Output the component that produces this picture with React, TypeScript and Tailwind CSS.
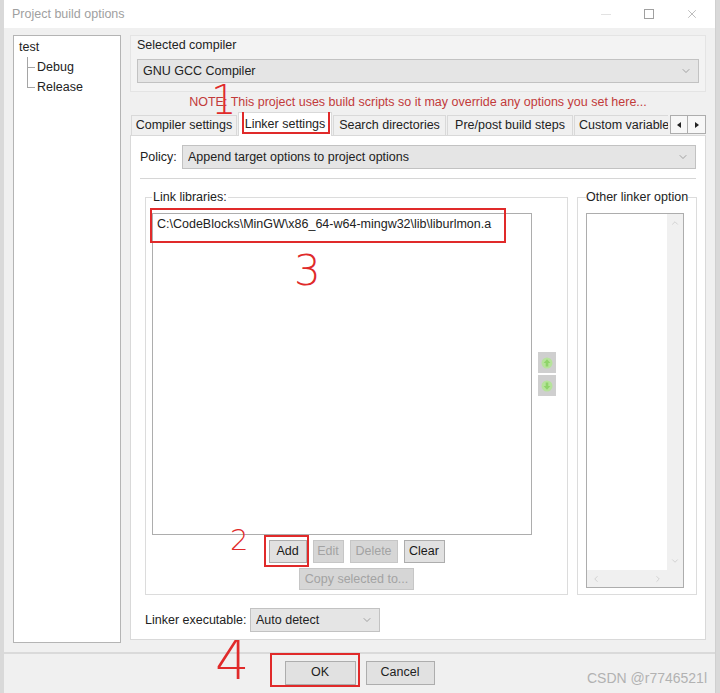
import { ChevronDown, ChevronUp, ChevronLeft, ChevronRight, X } from 'lucide-react';

function Combo({ text, className }: { text: string; className: string }) {
  return (
    <div className={`flex h-[24px] items-center border border-[#c2c2c2] bg-[#e5e5e5] pl-[5px] pr-[6px] ${className}`}>
      <span className="flex-1 truncate">{text}</span>
      <ChevronDown size={12} strokeWidth={1.5} className="text-[#8a8a8a]" />
    </div>
  );
}

function Btn({ label, w, disabled }: { label: string; w: string; disabled?: boolean }) {
  return (
    <div
      className={`flex h-[23px] items-center justify-center border ${w} ${
        disabled ? 'border-[#c6c6c6] bg-[#d6d6d6] text-[#a3a3a3]' : 'border-[#adadad] bg-[#e1e1e1] text-[#1a1a1a]'
      }`}
    >
      {label}
    </div>
  );
}

function GreenArrow({ down }: { down?: boolean }) {
  return (
    <div className="flex h-[21px] w-[18px] items-center justify-center bg-[#cfcfcf]">
      <svg width="12" height="12" viewBox="0 0 12 12" className={down ? 'rotate-180' : ''}>
        <circle cx="6" cy="6" r="5.5" fill="#b6e39b" />
        <path d="M6 2.2 L9.4 6 H7.3 V9.6 H4.7 V6 H2.6 Z" fill="#8fd46a" />
      </svg>
    </div>
  );
}

function TreeChild({ label, last }: { label: string; last?: boolean }) {
  return (
    <div className="flex h-[20px] items-center">
      <span className="relative ml-[8px] h-full w-[10px]">
        <span className={`absolute left-0 top-0 border-l border-[#a5a5a5] ${last ? 'h-1/2' : 'h-full'}`} />
        <span className="absolute left-0 top-1/2 w-[8px] border-t border-[#a5a5a5]" />
      </span>
      <span>{label}</span>
    </div>
  );
}

function Tab({ label, w, active }: { label: string; w: string; active?: boolean }) {
  return (
    <div
      className={`flex shrink-0 items-center justify-center whitespace-nowrap border border-[#d9d9d9] ${w} ${
        active ? 'relative z-10 h-[24px] border-b-0 bg-white' : 'h-[21px] bg-[#f0f0f0]'
      }`}
    >
      {label}
      {active && <span className="absolute -top-[6px] bottom-[2px] left-[3px] right-[1px] border-2 border-[#e02a2a]" />}
    </div>
  );
}

export default function App() {
  return (
    <div className="relative flex h-[693px] w-[720px] overflow-hidden bg-[#d9d9d9] font-['Liberation_Sans',Arial,sans-serif] text-[12.5px] leading-[15px] text-[#222]">
      <div className="ml-[4px] flex h-full w-[712px] flex-col border-r border-[#d0d0d0] bg-[#f0f0f0]">
        {/* title bar */}
        <div className="flex h-[28px] shrink-0 items-center bg-white pl-[8px]">
          <span className="text-[#a0a0a0]">Project build options</span>
          <div className="ml-auto mr-[2px] flex h-full">
            <div className="flex w-[43px] items-center justify-center">
              <span className="w-[10px] border-t border-[#e2e2e2]" />
            </div>
            <div className="flex w-[43px] items-center justify-center">
              <span className="h-[10px] w-[10px] border border-[#a0a0a0]" />
            </div>
            <div className="flex w-[43px] items-center justify-center">
              <X size={14} strokeWidth={1.2} className="text-[#a0a0a0]" />
            </div>
          </div>
        </div>

        {/* body */}
        <div className="flex h-[624px] shrink-0 pl-[9px] pt-[7px]">
          {/* targets tree */}
          <div className="h-[608px] w-[108px] border border-[#b4b4b4] bg-white pl-[5px] pt-[2px]">
            <div className="flex h-[19px] items-center">test</div>
            <TreeChild label="Debug" />
            <TreeChild label="Release" last />
          </div>

          <div className="ml-[9px] flex w-[576px] flex-col">
            {/* selected compiler */}
            <div className="h-[57px] border border-[#e4e4e4] bg-[#f3f3f3] px-[6px] pt-[2px]">
              <div>Selected compiler</div>
              <Combo text="GNU GCC Compiler" className="mt-[6px] w-full" />
            </div>

            <div className="mt-[3px] text-center text-[#c23a3a]">
              NOTE: This project uses build scripts so it may override any options you set here...
            </div>

            {/* tabs */}
            <div className="mt-[2px] flex h-[24px] items-end">
              <div className="flex flex-1 items-end gap-[1px] overflow-hidden pl-[1px]">
                <Tab label="Compiler settings" w="w-[106px]" />
                <Tab label="Linker settings" w="w-[94px]" active />
                <Tab label="Search directories" w="w-[113px]" />
                <Tab label="Pre/post build steps" w="w-[126px]" />
                <Tab label="Custom variables" w="w-[110px] !justify-start pl-[4px]" />
              </div>
              <div className="mb-[2px] ml-[2px] flex h-[19px]">
                <div className="flex w-[18px] items-center justify-center border border-[#adadad] bg-[#f7f7f7]">
                  <svg width="4" height="6" viewBox="0 0 4 6"><path d="M4 0 L0 3 L4 6 Z" fill="#222" /></svg>
                </div>
                <div className="flex w-[18px] items-center justify-center border border-l-0 border-[#adadad] bg-[#f7f7f7]">
                  <svg width="4" height="6" viewBox="0 0 4 6"><path d="M0 0 L4 3 L0 6 Z" fill="#222" /></svg>
                </div>
              </div>
            </div>

            {/* tab content */}
            <div className="-mt-px flex h-[505px] flex-col border border-[#d9d9d9] bg-white">
              <div className="mt-[9px] flex h-[24px] items-center px-[9px]">
                <span>Policy:</span>
                <Combo text="Append target options to project options" className="ml-auto w-[514px]" />
              </div>
              <div className="mx-[9px] mt-[9px] border-t border-[#d6d6d6]" />

              <div className="mt-[11px] flex h-[405px] gap-[9px] pl-[14px]">
                {/* link libraries */}
                <fieldset className="flex h-[405px] w-[423px] flex-col border border-[#dcdcdc] px-[6px]">
                  <legend className="px-[1px]">Link libraries:</legend>
                  <div className="mt-[8px] flex items-center">
                    <div className="relative h-[322px] w-[380px] border border-[#adadad] bg-white px-[4px] pt-[3px]">
                      <div className="whitespace-nowrap">C:\CodeBlocks\MinGW\x86_64-w64-mingw32\lib\liburlmon.a</div>
                      <span className="absolute -left-[3px] -top-[6px] h-[35px] w-[356px] border-2 border-[#e02a2a]" />
                    </div>
                    <div className="ml-[6px] flex flex-col gap-[2px]">
                      <GreenArrow />
                      <GreenArrow down />
                    </div>
                  </div>
                  <div className="mt-[5px] flex justify-center gap-[6px]">
                    <div className="relative">
                      <Btn label="Add" w="w-[38px]" />
                      <span className="absolute -bottom-[4px] -left-[5px] -right-[2px] -top-[5px] border-2 border-[#e02a2a]" />
                    </div>
                    <Btn label="Edit" w="w-[31px]" disabled />
                    <Btn label="Delete" w="w-[48px]" disabled />
                    <Btn label="Clear" w="w-[41px]" />
                  </div>
                  <div className="mt-[5px] flex justify-center">
                    <div className="flex h-[22px] w-[115px] items-center justify-center border border-[#c6c6c6] bg-[#d6d6d6] text-[#a3a3a3]">
                      Copy selected to...
                    </div>
                  </div>
                </fieldset>

                {/* other linker options */}
                <fieldset className="flex h-[405px] w-[115px] flex-col border border-[#dcdcdc] px-[8px]">
                  <legend className="whitespace-nowrap">Other linker option</legend>
                  <div className="mt-[8px] flex h-[375px] w-[98px] flex-col border border-[#adadad] bg-white">
                    <div className="flex flex-1">
                      <div className="flex-1" />
                      <div className="flex w-[16px] flex-col items-center justify-between bg-[#f0f0f0] py-[4px]">
                        <ChevronUp size={10} strokeWidth={1.5} className="text-[#c0c0c0]" />
                        <ChevronDown size={10} strokeWidth={1.5} className="text-[#c0c0c0]" />
                      </div>
                    </div>
                    <div className="flex h-[17px]">
                      <div className="flex flex-1 items-center justify-between bg-[#f0f0f0] px-[4px]">
                        <ChevronLeft size={10} strokeWidth={1.5} className="text-[#c0c0c0]" />
                        <ChevronRight size={10} strokeWidth={1.5} className="text-[#c0c0c0]" />
                      </div>
                      <div className="w-[16px] bg-[#f0f0f0]" />
                    </div>
                  </div>
                </fieldset>
              </div>

              <div className="mt-[13px] flex h-[24px] items-center pl-[14px]">
                <span className="w-[105px]">Linker executable:</span>
                <Combo text="Auto detect" className="w-[130px]" />
              </div>
            </div>
          </div>
        </div>

        {/* bottom bar */}
        <div className="flex flex-1 items-center justify-center gap-[10px] border-t-2 border-[#dadada] pb-[2px]">
          <div className="relative">
            <div className="flex h-[24px] w-[71px] items-center justify-center border border-[#adadad] bg-[#e1e1e1]">OK</div>
            <span className="absolute -bottom-[2px] -left-[15px] -right-[4px] -top-[8px] border-2 border-[#e02a2a]" />
          </div>
          <div className="flex h-[24px] w-[69px] items-center justify-center border border-[#adadad] bg-[#e1e1e1]">Cancel</div>
        </div>
      </div>

      {/* hand-written annotations */}
      <span className="absolute left-[211px] top-[80px] font-['DejaVu_Sans',sans-serif] text-[40px] font-extralight leading-none text-[#e02a2a]">1</span>
      <span className="absolute left-[294px] top-[250px] font-['DejaVu_Sans',sans-serif] text-[42px] font-extralight leading-none text-[#e02a2a]">3</span>
      <span className="absolute left-[230px] top-[526px] font-['DejaVu_Sans',sans-serif] text-[29px] font-extralight leading-none text-[#e02a2a]">2</span>
      <span className="absolute left-[215px] top-[634px] font-['DejaVu_Sans',sans-serif] text-[54px] font-extralight leading-none text-[#e02a2a]">4</span>

      <span className="absolute bottom-[7px] right-[13px] text-[14px] text-[#b2b2b2]">CSDN @r7746521l</span>
    </div>
  );
}
